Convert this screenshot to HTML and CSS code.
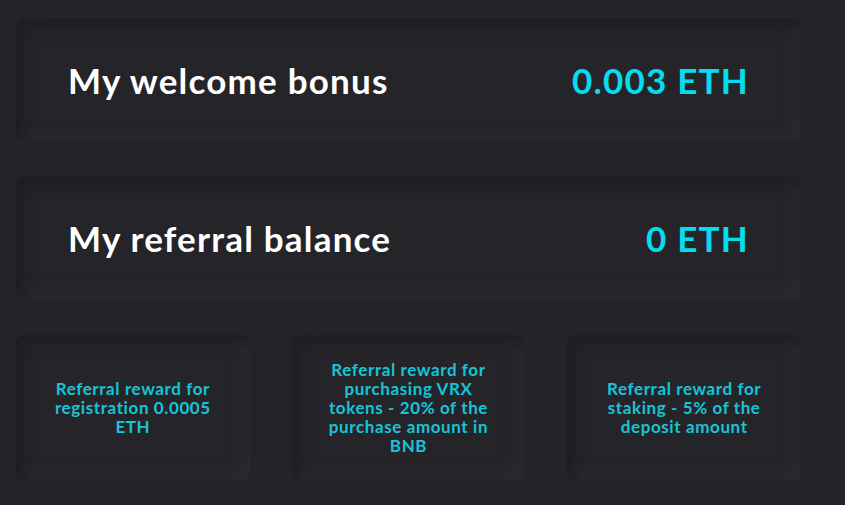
FILE: index.html
```html
<!DOCTYPE html>
<html lang="en">
<head>
    <meta charset="UTF-8">
    <meta name="viewport" content="width=device-width, initial-scale=1.0">
    <title>Referral</title>
    <link rel="stylesheet" href="styles.css">
</head>
<body>

<div id="referral-container">
    <div class="balance-card">
        <span class="balance-title">My welcome bonus</span>
        <span class="balance-value">0.003 ETH</span>
    </div>
    <div class="balance-card">
        <span class="balance-title">My referral balance</span>
        <span class="balance-value">0 ETH</span>
    </div>
    <div class="reward-list">
        <div class="reward">Referral reward for registration 0.0005 ETH</div>
        <div class="reward">Referral reward for purchasing VRX tokens - 20% of the purchase amount in BNB</div>
        <div class="reward">Referral reward for staking - 5% of the deposit amount</div>
    </div>
</div>

</body>
</html>
```
FILE: styles.css
```css
body {
    font-family: Lato, "Open Sans", sans-serif;
    margin: 0;
    padding: 0;
    background-color: #242329;
}

#referral-container {
    width: 785px;
    padding: 19px 0 0 16px;
    display: flex;
    flex-direction: column;
    gap: 35px;
}

.balance-card,
.reward {
    background-color: #252429;
    border-radius: 8px;
    box-shadow: inset 7px 7px 14px #1e1d23, inset -7px -7px 14px #2c2b31;
}

.balance-card {
    height: 123px;
    padding: 0 52px 2px 52px;
    display: flex;
    align-items: center;
    justify-content: space-between;
    box-sizing: border-box;
}

.balance-title {
    color: #fff;
    font-size: 35px;
    font-weight: 700;
    letter-spacing: 1.2px;
}

.balance-value {
    color: #05dcef;
    font-size: 35px;
    font-weight: 700;
    letter-spacing: 1.2px;
}

.reward-list {
    display: grid;
    grid-template-columns: repeat(3, 1fr);
    gap: 42px;
}

.reward {
    height: 145px;
    padding: 0 30px;
    display: flex;
    align-items: center;
    justify-content: center;
    text-align: center;
    color: #15c4d8;
    font-size: 17px;
    font-weight: 700;
    line-height: 19px;
    letter-spacing: 0.6px;
}
```
